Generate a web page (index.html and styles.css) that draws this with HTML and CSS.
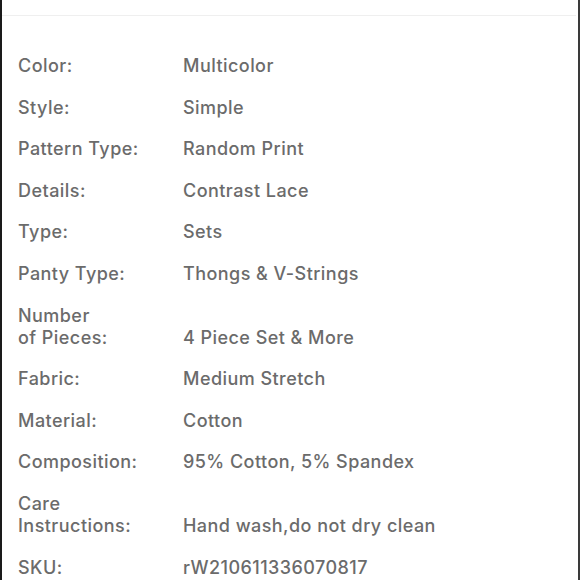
FILE: index.html
```html
<!DOCTYPE html>
<html>
<head>
<meta charset="utf-8">
<link rel="stylesheet" href="styles.css">
</head>
<body>
<div class="frame">
  <div class="topbar"></div>
  <dl class="specs">
    <dt>Color:</dt><dd>Multicolor</dd>
    <dt>Style:</dt><dd>Simple</dd>
    <dt>Pattern Type:</dt><dd>Random Print</dd>
    <dt>Details:</dt><dd>Contrast Lace</dd>
    <dt>Type:</dt><dd>Sets</dd>
    <dt>Panty Type:</dt><dd>Thongs &amp; V-Strings</dd>
    <dt>Number<br>of Pieces:</dt><dd>4 Piece Set &amp; More</dd>
    <dt>Fabric:</dt><dd>Medium Stretch</dd>
    <dt>Material:</dt><dd>Cotton</dd>
    <dt>Composition:</dt><dd>95% Cotton, 5% Spandex</dd>
    <dt>Care<br>Instructions:</dt><dd>Hand wash,do not dry clean</dd>
    <dt>SKU:</dt><dd>rW210611336070817</dd>
  </dl>
</div>
</body>
</html>
```

FILE: styles.css
```css
html, body {
  margin: 0;
  padding: 0;
  background: #fff;
}
.frame {
  width: 580px;
  height: 580px;
  box-sizing: border-box;
  border-left: 2px solid #1a1a1a;
  border-right: 2px solid #3a3a3a;
  margin-right: 1px;
  overflow: hidden;
  font-family: Inter, "Liberation Sans", sans-serif;
}
.topbar {
  height: 15px;
  border-bottom: 1px solid #efefef;
  margin-right: 2px;
}
.specs {
  margin: 0;
  padding: 39px 0 0 16px;
  display: grid;
  grid-template-columns: 165px 1fr;
  row-gap: 19.6px;
  align-items: end;
  font-size: 18px;
  line-height: 22px;
  letter-spacing: 0.45px;
  color: #6b6b6b;
  font-weight: 500;
}
.specs dt, .specs dd {
  margin: 0;
}
```
